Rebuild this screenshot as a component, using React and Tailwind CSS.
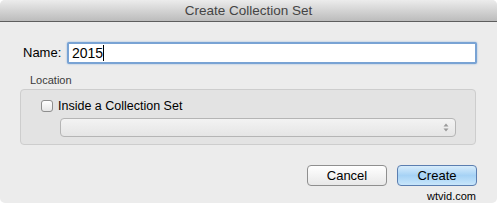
export default function App() {
  const font = { fontFamily: '"Liberation Sans", Arial, sans-serif' };
  return (
    <div className="w-[497px] h-[203px] bg-white">
      <div className="w-[497px] h-[203px] rounded-[5px] overflow-hidden bg-[#ececec] flex flex-col" style={font}>
        <div className="h-[22px] shrink-0 bg-gradient-to-b from-[#ececec] to-[#bcbcbc] border-b border-[#5e5e5e] flex items-center justify-center">
          <span className="text-[13.5px] text-[#444] leading-none">Create Collection Set</span>
        </div>
        <div className="flex flex-col pl-[20px] pr-[20px]">
          <div className="flex items-center mt-[20px] h-[22px]">
            <span className="text-[13px] text-black ml-[3px] w-[44px] shrink-0">Name:</span>
            <div className="flex-1 h-[22px] bg-white border-[2px] border-[#79a3d4] rounded-[2px] flex items-center pl-[3px] shadow-[0_0_2px_#8fb3dd]">
              <span className="text-[14px] text-black leading-none">2015</span>
              <span className="w-px h-[16px] bg-black" />
            </div>
          </div>
          <div className="text-[11px] text-[#3a3a3a] ml-[10px] mt-[9px] leading-[14px]">Location</div>
          <div className="mt-[2px] mr-[1px] h-[56px] rounded-[4px] border border-[#cdcdcd] bg-[#e3e3e3] flex flex-col pl-[20px] pr-[19px]">
            <div className="flex items-center mt-[9px] h-[14px]">
              <span className="w-[12px] h-[12px] rounded-[3px] border border-[#8e8e8e] bg-gradient-to-b from-white to-[#e6e6e6] shrink-0" />
              <span className="text-[12.5px] text-black ml-[5px] leading-none">Inside a Collection Set</span>
            </div>
            <div className="mt-[5px] ml-[19px] h-[19px] rounded-[4px] border border-[#b5b5b5] bg-gradient-to-b from-[#f3f3f3] to-[#e5e5e5] flex items-center justify-end pr-[6px]">
              <svg width="6" height="9" viewBox="0 0 6 9">
                <path d="M3 0.5 L5.5 3.5 H0.5 Z" fill="#9a9a9a" />
                <path d="M3 8.5 L5.5 5.5 H0.5 Z" fill="#9a9a9a" />
              </svg>
            </div>
          </div>
          <div className="flex justify-end mt-[20px] gap-[10px] mr-[0px]">
            <div className="w-[80px] h-[21px] rounded-[4px] border border-[#8f8f8f] bg-gradient-to-b from-white to-[#e8e8e8] flex items-center justify-center text-[13px] text-black leading-none">Cancel</div>
            <div className="w-[80px] h-[21px] rounded-[4px] border border-[#5b7eb0] bg-gradient-to-b from-[#d7ecfb] via-[#a6d2f5] to-[#c8e6fb] flex items-center justify-center text-[13px] text-black leading-none">Create</div>
          </div>
          <div className="flex justify-end mt-[5px] mr-[1px]">
            <span className="text-[11px] text-black leading-none">wtvid.com</span>
          </div>
        </div>
      </div>
    </div>
  );
}
